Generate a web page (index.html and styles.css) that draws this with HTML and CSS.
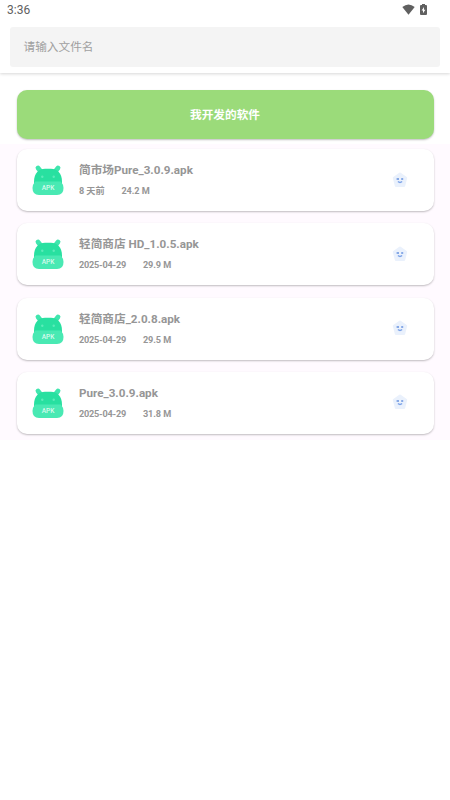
FILE: index.html
```html
<!DOCTYPE html>
<html lang="zh-CN">
<head>
<meta charset="utf-8">
<title>APK</title>
<link rel="stylesheet" href="styles.css">
</head>
<body>
<svg class="defs" width="0" height="0">
  <symbol id="apk" viewBox="0 0 32 32">
    <path d="M6 4 9.5 8.5M26 4 22.5 8.5" stroke="#40e6ae" stroke-width="4.8" stroke-linecap="round"/>
    <path d="M2 22V17.5C2 9 7 4.8 13 4.8h6c6 0 11 4.2 11 12.7V22z" fill="#28e0a0"/>
    <circle cx="10.3" cy="12.8" r="1.2" fill="#5cebba"/>
    <circle cx="21.7" cy="12.8" r="1.2" fill="#5cebba"/>
    <path d="M3.2 17.5H28.8Q31.5 20.5 31.5 24Q31.5 31 25 31H7Q.5 31 .5 24Q.5 20.5 3.2 17.5Z" fill="#49e9b3"/>
  </symbol>
  <symbol id="face" viewBox="0 0 16 16">
    <path d="M8 1.8 14 6 12 13.8H4L2 6Z" fill="#eaf1fc" stroke="#eaf1fc" stroke-width="2.4" stroke-linejoin="round"/>
    <path d="M4.6 7H7M9.2 7H11.2" stroke="#87a9e6" stroke-width="1.9"/>
    <path d="M5.9 9.6Q8 11.5 10.1 9.6" fill="none" stroke="#7ca3e8" stroke-width="1.3"/>
  </symbol>
</svg>
<header class="top">
  <div class="status">
    <span>3:36</span>
    <div class="status-icons">
      <svg width="13" height="11" viewBox="0 0 13 11"><path d="M.3 3Q6.5-2 12.7 3L6.5 10.7Z" fill="#606060"/></svg>
      <svg width="7" height="11" viewBox="0 0 7 11"><path d="M2 0h3v1h1q1 0 1 1v8q0 1-1 1H1q-1 0-1-1V2q0-1 1-1h1z" fill="#606060"/><path d="M4 3 1.6 6.5H3V9.2L5.4 5.7H4Z" fill="#fff"/></svg>
    </div>
  </div>
  <div class="search">请输入文件名</div>
</header>
<main>
  <div class="banner">我开发的软件</div>
  <section class="list">
    <article class="card">
      <div class="apk"><svg width="32" height="32"><use href="#apk"/></svg><span class="apk-label">APK</span></div>
      <div class="info"><div class="name">简市场Pure_3.0.9.apk</div><div class="meta"><span>8 天前</span><span>24.2 M</span></div></div>
      <svg class="face"><use href="#face"/></svg>
    </article>
    <article class="card">
      <div class="apk"><svg width="32" height="32"><use href="#apk"/></svg><span class="apk-label">APK</span></div>
      <div class="info"><div class="name">轻简商店 HD_1.0.5.apk</div><div class="meta"><span class="date">2025-04-29</span><span>29.9 M</span></div></div>
      <svg class="face"><use href="#face"/></svg>
    </article>
    <article class="card">
      <div class="apk"><svg width="32" height="32"><use href="#apk"/></svg><span class="apk-label">APK</span></div>
      <div class="info"><div class="name">轻简商店_2.0.8.apk</div><div class="meta"><span class="date">2025-04-29</span><span>29.5 M</span></div></div>
      <svg class="face"><use href="#face"/></svg>
    </article>
    <article class="card">
      <div class="apk"><svg width="32" height="32"><use href="#apk"/></svg><span class="apk-label">APK</span></div>
      <div class="info"><div class="name">Pure_3.0.9.apk</div><div class="meta"><span class="date">2025-04-29</span><span>31.8 M</span></div></div>
      <svg class="face"><use href="#face"/></svg>
    </article>
  </section>
</main>
</body>
</html>
```
FILE: styles.css
```css
* { box-sizing: border-box; }
body {
  margin: 0;
  background: #fff;
  font-family: Roboto, "Noto Sans CJK SC", sans-serif;
  color: #969696;
}
.defs { display: block; height: 0; }
.top {
  height: 73px;
  box-shadow: 0 1px 3px rgba(0, 0, 0, .16);
}
.status {
  height: 27px;
  padding: 3px 23px 0 7px;
  display: flex;
  justify-content: space-between;
  font-size: 12px;
  line-height: 15px;
  color: #606060;
}
.status-icons { display: flex; gap: 5px; padding-top: .5px; }
.search {
  height: 40px;
  margin: 0 10px;
  padding-left: 13.5px;
  border-radius: 3px;
  background: #f4f4f4;
  font-size: 11.67px;
  line-height: 40px;
  color: #a0a0a0;
}
.banner {
  height: 49px;
  margin: 17px 16.5px 5px;
  border-radius: 10px;
  background: #9bdb7a;
  box-shadow: 0 1px 2px rgba(0, 0, 0, .25);
  color: #fff;
  font-size: 11.67px;
  font-weight: 700;
  line-height: 51px;
  text-align: center;
}
.list {
  height: 296px;
  padding: 5.2px 16.5px 0;
  display: flex;
  flex-direction: column;
  gap: 12.2px;
  background: #fffaff;
}
.card {
  flex: none;
  height: 62px;
  padding: 0 25.5px 0 15.5px;
  display: flex;
  align-items: center;
  border-radius: 10px;
  background: #fff;
  box-shadow: 0 1px 2px rgba(0, 0, 0, .25);
}
.apk {
  position: relative;
  flex: none;
  width: 32px;
  height: 32px;
}
.apk svg { display: block; }
.apk-label {
  position: absolute;
  left: 0;
  width: 32px;
  top: 20px;
  font-size: 6.6px;
  font-weight: 500;
  line-height: 9px;
  text-align: center;
  color: #d5faec;
}
.info {
  flex: 1;
  margin-left: 15px;
  font-weight: 700;
  white-space: nowrap;
}
.name { font-size: 11.67px; line-height: 20px; padding-top: 1px; }
.meta {
  display: flex;
  gap: 17px;
  font-size: 9.17px;
  line-height: 21px;
}
.meta span { letter-spacing: -.1px; }
.meta .date { letter-spacing: -.23px; }
.face { flex: none; width: 16px; height: 16px; margin-bottom: 1px; }
```
